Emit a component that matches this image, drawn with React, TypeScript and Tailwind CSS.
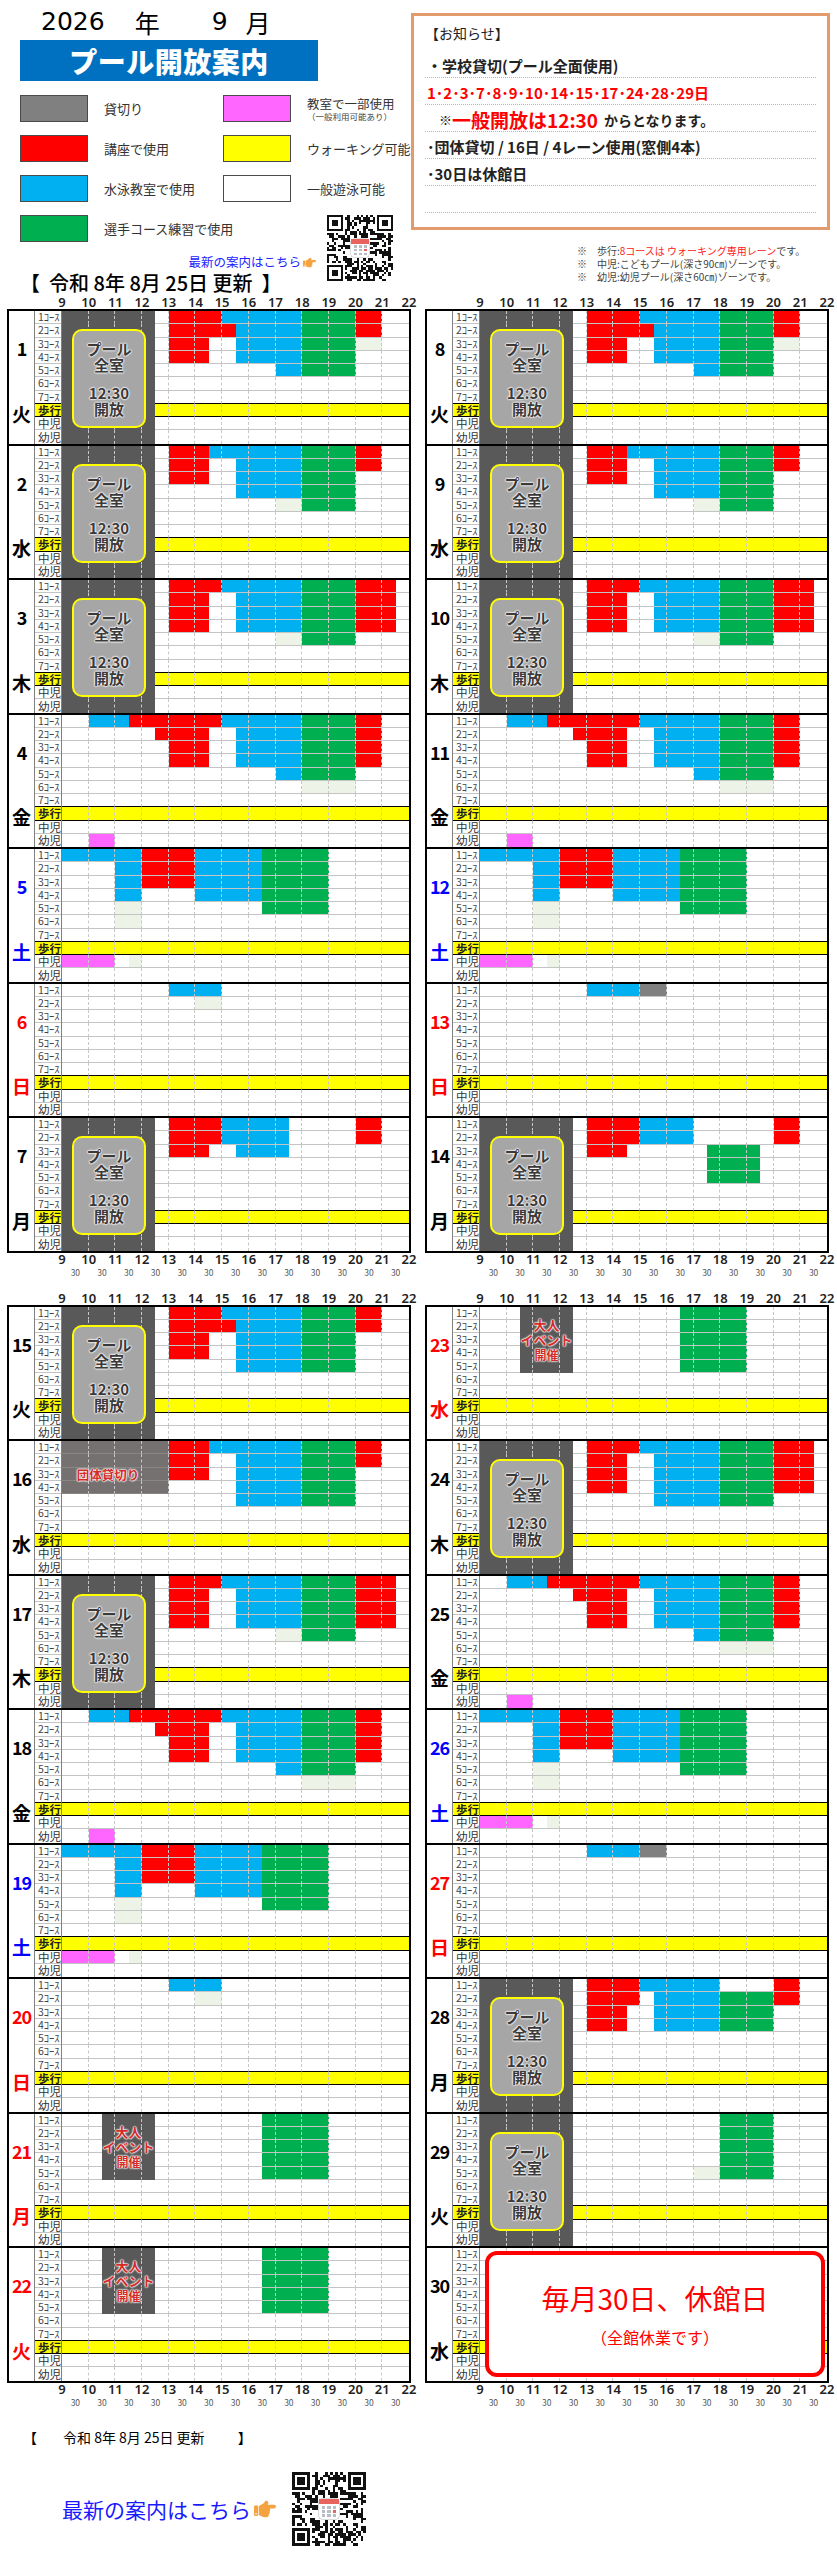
import { FaHandPointRight } from "react-icons/fa"

type Seg = [number, number, number, string]

const WEEK = ["日", "月", "火", "水", "木", "金", "土"]
const HOLIDAYS = [21, 22, 23]
const SCHOOL = [1, 2, 3, 7, 8, 9, 10, 14, 15, 17, 24, 28, 29]
const EVENT = [21, 22, 23]
const LANES = ["1ｺｰｽ", "2ｺｰｽ", "3ｺｰｽ", "4ｺｰｽ", "5ｺｰｽ", "6ｺｰｽ", "7ｺｰｽ", "歩行", "中児", "幼児"]
const HOURS = [9, 10, 11, 12, 13, 14, 15, 16, 17, 18, 19, 20, 21, 22]

const BG: Record<string, string> = {
  ".": "bg-white",
  r: "bg-[#ff0000]",
  b: "bg-[#00b0f0]",
  g: "bg-[#00b050]",
  p: "bg-[#ff66ff]",
  l: "bg-[#eef3e8]",
  d: "bg-[#595959]",
  k: "bg-[#767171]",
  s: "bg-[#808080]",
  y: "bg-[#ffff00]",
}

const TUE: Seg[] = [
  [0, 13, 15, "r"], [0, 15, 18, "b"], [0, 18, 20, "g"], [0, 20, 21, "r"],
  [1, 13, 15.5, "r"], [1, 15.5, 18, "b"], [1, 18, 20, "g"], [1, 20, 21, "r"],
  [2, 13, 14.5, "r"], [2, 15.5, 18, "b"], [2, 18, 20, "g"], [2, 20, 21, "l"],
  [3, 13, 14.5, "r"], [3, 15.5, 18, "b"], [3, 18, 20, "g"],
  [4, 17, 18, "b"], [4, 18, 20, "g"],
]
const TUE15: Seg[] = [
  [0, 13, 15, "r"], [0, 15, 18, "b"], [0, 18, 20, "g"], [0, 20, 21, "r"],
  [1, 13, 15.5, "r"], [1, 15.5, 18, "b"], [1, 18, 20, "g"], [1, 20, 21, "r"],
  [2, 13, 14.5, "r"], [2, 15.5, 18, "b"], [2, 18, 20, "g"],
  [3, 13, 14.5, "r"], [3, 15.5, 18, "b"], [3, 18, 20, "g"],
  [4, 15.5, 18, "b"], [4, 18, 20, "g"],
]
const WED: Seg[] = [
  [0, 13, 14.5, "r"], [0, 14.5, 18, "b"], [0, 18, 20, "g"], [0, 20, 21, "r"],
  [1, 13, 14.5, "r"], [1, 15.5, 18, "b"], [1, 18, 20, "g"], [1, 20, 21, "r"],
  [2, 13, 14.5, "r"], [2, 15.5, 18, "b"], [2, 18, 20, "g"],
  [3, 15.5, 18, "b"], [3, 18, 20, "g"],
  [4, 17, 18, "l"], [4, 18, 20, "g"],
]
const WED16: Seg[] = [
  [0, 13, 14.5, "r"], [0, 14.5, 18, "b"], [0, 18, 20, "g"], [0, 20, 21, "r"],
  [1, 13, 14.5, "r"], [1, 15.5, 18, "b"], [1, 18, 20, "g"], [1, 20, 21, "r"],
  [2, 13, 14.5, "r"], [2, 15.5, 18, "b"], [2, 18, 20, "g"],
  [3, 15.5, 18, "b"], [3, 18, 20, "g"],
  [4, 15.5, 18, "b"], [4, 18, 20, "g"],
]
const THU: Seg[] = [
  [0, 13, 15, "r"], [0, 15, 18, "b"], [0, 18, 20, "g"], [0, 20, 21.5, "r"],
  [1, 13, 14.5, "r"], [1, 15.5, 18, "b"], [1, 18, 20, "g"], [1, 20, 21.5, "r"],
  [2, 13, 14.5, "r"], [2, 15.5, 18, "b"], [2, 18, 20, "g"], [2, 20, 21.5, "r"],
  [3, 13, 14.5, "r"], [3, 15.5, 18, "b"], [3, 18, 20, "g"], [3, 20, 21.5, "r"],
  [4, 17, 18, "l"], [4, 18, 20, "g"],
]
const THU24: Seg[] = [
  [0, 13, 15, "r"], [0, 15, 18, "b"], [0, 18, 20, "g"], [0, 20, 21.5, "r"],
  [1, 13, 14.5, "r"], [1, 15.5, 18, "b"], [1, 18, 20, "g"], [1, 20, 21.5, "r"],
  [2, 13, 14.5, "r"], [2, 15.5, 18, "b"], [2, 18, 20, "g"], [2, 20, 21.5, "r"],
  [3, 13, 14.5, "r"], [3, 15.5, 18, "b"], [3, 18, 20, "g"], [3, 20, 21.5, "r"],
  [4, 15.5, 18, "b"], [4, 18, 20, "g"],
]
const FRI: Seg[] = [
  [0, 10, 11.5, "b"], [0, 11.5, 15, "r"], [0, 15, 18, "b"], [0, 18, 20, "g"], [0, 20, 21, "r"],
  [1, 12.5, 14.5, "r"], [1, 15.5, 18, "b"], [1, 18, 20, "g"], [1, 20, 21, "r"],
  [2, 13, 14.5, "r"], [2, 15.5, 18, "b"], [2, 18, 20, "g"], [2, 20, 21, "r"],
  [3, 13, 14.5, "r"], [3, 15.5, 18, "b"], [3, 18, 20, "g"], [3, 20, 21, "r"],
  [4, 17, 18, "b"], [4, 18, 20, "g"],
  [5, 18, 20, "l"],
  [9, 10, 11, "p"],
]
const SAT: Seg[] = [
  [0, 9, 12, "b"], [0, 12, 14, "r"], [0, 14, 16.5, "b"], [0, 16.5, 19, "g"],
  [1, 11, 12, "b"], [1, 12, 14, "r"], [1, 14, 16.5, "b"], [1, 16.5, 19, "g"],
  [2, 11, 12, "b"], [2, 12, 14, "r"], [2, 14, 16.5, "b"], [2, 16.5, 19, "g"],
  [3, 11, 12, "b"], [3, 14, 16.5, "b"], [3, 16.5, 19, "g"],
  [4, 11, 12, "l"], [4, 16.5, 19, "g"],
  [5, 11, 12, "l"],
  [8, 9, 11, "p"], [8, 11.5, 12, "l"],
]
const SUN_A: Seg[] = [[0, 13, 15, "b"], [1, 14, 15, "l"]]
const SUN_B: Seg[] = [[0, 13, 15, "b"], [0, 15, 16, "s"]]
const MON7: Seg[] = [
  [0, 13, 15, "r"], [0, 15, 17.5, "b"], [0, 20, 21, "r"],
  [1, 13, 15, "r"], [1, 15, 17.5, "b"], [1, 20, 21, "r"],
  [2, 13, 14.5, "r"], [2, 15.5, 17.5, "b"],
]
const MON14: Seg[] = [
  [0, 13, 15, "r"], [0, 15, 17, "b"], [0, 20, 21, "r"],
  [1, 13, 15, "r"], [1, 15, 17, "b"], [1, 20, 21, "r"],
  [2, 13, 14.5, "r"], [2, 17.5, 19.5, "g"],
  [3, 17.5, 19.5, "g"], [4, 17.5, 19.5, "g"],
]
const MON28: Seg[] = [
  [0, 13, 15, "r"], [0, 15, 18, "b"], [0, 20, 21, "r"],
  [1, 13, 15, "r"], [1, 15.5, 18, "b"], [1, 18, 20, "g"], [1, 20, 21, "r"],
  [2, 13, 14.5, "r"], [2, 15.5, 18, "b"], [2, 18, 20, "g"],
  [3, 13, 14.5, "r"], [3, 15.5, 18, "b"], [3, 18, 20, "g"],
]
const TUE29: Seg[] = [
  [0, 18, 20, "g"], [1, 18, 20, "g"], [2, 18, 20, "g"], [3, 18, 20, "g"],
  [4, 17, 18, "l"], [4, 18, 20, "g"],
]

const SEGS: Record<number, Seg[]> = {
  1: TUE, 2: WED, 3: THU, 4: FRI, 5: SAT, 6: SUN_A, 7: MON7,
  8: TUE, 9: WED, 10: THU, 11: FRI, 12: SAT, 13: SUN_B, 14: MON14,
  15: TUE15, 16: WED16, 17: THU, 18: FRI, 19: SAT, 20: SUN_A,
  24: THU24, 25: FRI, 26: SAT, 27: SUN_B, 28: MON28, 29: TUE29,
}

function buildRows(day: number) {
  const rows = Array.from({ length: 10 }, () => Array<string>(26).fill("."))
  const put = (r: number, a: number, b: number, c: string) => {
    for (let i = (a - 9) * 2; i < (b - 9) * 2; i++) rows[r][i] = c
  }
  if (SCHOOL.includes(day)) {
    for (let r = 0; r < 10; r++) put(r, 9, 12.5, "d")
    put(7, 12.5, 22, "y")
  } else {
    put(7, 9, 22, "y")
  }
  if (day === 16) for (let r = 0; r < 4; r++) put(r, 9, 13, "k")
  if (EVENT.includes(day)) {
    for (let r = 0; r < 5; r++) {
      put(r, 10.5, 12.5, "d")
      put(r, 16.5, 19, "g")
    }
  }
  for (const [r, a, b, c] of SEGS[day] ?? []) put(r, a, b, c)
  return rows
}

function bottomLine(r: number, c: string) {
  if (r === 9) return ""
  if (c === "d") return "border-b border-b-[#595959]"
  if (c === "k") return "border-b border-b-[#8a8585]"
  if (r === 6 || r === 7) return "border-b border-b-black"
  return "border-b border-b-[#c4c4c4]"
}

const OUTLINE = "[text-shadow:0_0_2px_#fff,0_0_2px_#fff,0_0_2px_#fff,0_0_1px_#fff]"

function DayBlock({ day, last }: { day: number; last: boolean }) {
  const w = WEEK[(day + 1) % 7]
  const tone =
    w === "土" ? "text-[#0000ff]" : w === "日" || HOLIDAYS.includes(day) ? "text-[#ff0000]" : "text-black"
  const rows = buildRows(day)

  return (
    <div className={`flex ${last ? "" : "border-b-2 border-black"}`}>
      <div className={`flex w-[26px] flex-col items-center border-r border-[#808080] font-bold ${tone}`}>
        <span className="mt-[27px] text-[18px] leading-[20px] tracking-[-1px]">{day}</span>
        <span className="mt-auto mb-[20px] text-[19px] leading-[20px]">{w}</span>
      </div>
      <div className="w-[27px] border-r border-[#808080]">
        {LANES.map((lane, r) => (
          <div
            key={lane}
            className={`flex h-[13.25px] items-center ${r === 7 ? "bg-[#ffff00]" : "bg-white"} ${
              r === 9 ? "" : r === 6 || r === 7 ? "border-b border-black" : "border-b border-[#c4c4c4]"
            }`}
          >
            {r < 7 ? (
              <span className="pl-[3px] text-[10.5px] leading-[12px] whitespace-nowrap text-[#444]">{lane}</span>
            ) : (
              <span className={`pl-[3px] text-[11.5px] leading-[12px] ${r === 7 ? "font-bold text-[#222]" : "text-[#333]"}`}>
                {lane}
              </span>
            )}
          </div>
        ))}
      </div>
      <div className="relative flex-1">
        {rows.map((row, r) => (
          <div key={r} className="grid h-[13.25px] grid-cols-[repeat(26,minmax(0,1fr))]">
            {row.map((c, i) => (
              <div
                key={i}
                className={`${BG[c]} ${bottomLine(r, c)} ${
                  i % 2 === 1 && i < 25 ? "border-r border-r-[#c8c8c8] [border-right-style:dashed]" : ""
                }`}
              />
            ))}
          </div>
        ))}

        {SCHOOL.includes(day) && (
          <div
            className={`absolute top-[18px] left-[10px] flex h-[99px] w-[74px] flex-col items-center rounded-[10px] border-[2.5px] border-[#ffff00] bg-[#a6a6a6] pt-[10px] text-[15px] leading-[16px] font-bold text-[#3a3a3a] ${OUTLINE}`}
          >
            <span>プール</span>
            <span>全室</span>
            <span className="mt-[12px]">12:30</span>
            <span>開放</span>
          </div>
        )}

        {day === 16 && (
          <div className={`absolute top-[26px] left-0 w-[92px] text-center text-[12.5px] leading-[16px] font-bold text-[#d42a2a] ${OUTLINE}`}>
            団体貸切り
          </div>
        )}

        {EVENT.includes(day) && (
          <div
            className={`absolute top-[10px] left-[38px] flex w-[57px] flex-col items-center text-[13px] leading-[15px] font-bold text-[#d42a2a] ${OUTLINE}`}
          >
            <span>大人</span>
            <span className="whitespace-nowrap">イベント</span>
            <span className="text-[12px]">開催</span>
          </div>
        )}

        {day === 30 && (
          <div className="absolute top-[3px] right-[2px] bottom-[4px] left-[5px] flex flex-col items-center rounded-[12px] border-4 border-[#ff0000] bg-white">
            <span className="mt-[26px] text-[28px] leading-[34px] text-[#ff0000]">毎月30日、休館日</span>
            <span className="mt-[12px] text-[16px] leading-[20px] text-[#ff0000]">（全館休業です）</span>
          </div>
        )}
      </div>
    </div>
  )
}

function HourLabels() {
  return (
    <div className="flex h-[13px] pl-[41.65px] font-['Noto_Sans',sans-serif] text-[13px] leading-[13px] font-semibold text-[#222]">
      {HOURS.map((h) => (
        <span key={h} className="w-[26.69px] shrink-0 text-center">
          {h}
        </span>
      ))}
    </div>
  )
}

function HalfLabels() {
  return (
    <div className="flex h-[12px] pl-[55px] text-[8.5px] leading-[12px] text-[#555]">
      {HOURS.slice(0, 13).map((h) => (
        <span key={h} className="w-[26.69px] shrink-0 text-center">
          30
        </span>
      ))}
    </div>
  )
}

function Panel({ days }: { days: number[] }) {
  return (
    <div className="w-[404px]">
      <HourLabels />
      <div className="w-[404px] border-2 border-black bg-white">
        {days.map((d, i) => (
          <DayBlock key={d} day={d} last={i === days.length - 1} />
        ))}
      </div>
      <HourLabels />
      <HalfLabels />
    </div>
  )
}

function QrCode({ size }: { size: number }) {
  const n = 29
  let seed = 4217
  const rnd = () => {
    seed = (seed * 9301 + 49297) % 233280
    return seed / 233280
  }
  const mods: [number, number][] = []
  for (let y = 0; y < n; y++) {
    for (let x = 0; x < n; x++) {
      const finder = (x < 8 && y < 8) || (x >= n - 8 && y < 8) || (x < 8 && y >= n - 8)
      const logo = x >= 10 && x <= 18 && y >= 10 && y <= 18
      if (!finder && !logo && rnd() > 0.5) mods.push([x, y])
    }
  }
  const corners: [number, number][] = [[0, 0], [n - 7, 0], [0, n - 7]]
  return (
    <svg width={size} height={size} viewBox={`0 0 ${n} ${n}`} shapeRendering="crispEdges">
      <rect width={n} height={n} fill="#fff" />
      {mods.map(([x, y]) => (
        <rect key={`${x}-${y}`} x={x} y={y} width={1} height={1} fill="#111" />
      ))}
      {corners.map(([x, y]) => (
        <g key={`${x}-${y}`}>
          <rect x={x} y={y} width={7} height={7} fill="#111" />
          <rect x={x + 1} y={y + 1} width={5} height={5} fill="#fff" />
          <rect x={x + 2} y={y + 2} width={3} height={3} fill="#111" />
        </g>
      ))}
      <rect x={10.5} y={10.5} width={8} height={8} rx={1} fill="#fff" stroke="#d0d0d0" strokeWidth={0.3} />
      <rect x={10.5} y={10.5} width={8} height={2.2} fill="#e8625e" />
      {[0, 1, 2].map((a) =>
        [0, 1, 2].map((b) => (
          <rect key={`${a}${b}`} x={11.7 + a * 2.2} y={13.4 + b * 1.6} width={1.3} height={1} fill={a === 2 && b === 1 ? "#e8625e" : "#b8bcc4"} />
        ))
      )}
    </svg>
  )
}

const LEGEND = [
  { c: "bg-[#808080]", t: "貸切り" },
  { c: "bg-[#ff66ff]", t: "教室で一部使用", s: "（一般利用可能あり）" },
  { c: "bg-[#ff0000]", t: "講座で使用" },
  { c: "bg-[#ffff00]", t: "ウォーキング可能" },
  { c: "bg-[#00b0f0]", t: "水泳教室で使用" },
  { c: "bg-white", t: "一般遊泳可能" },
  { c: "bg-[#00b050]", t: "選手コース練習で使用" },
]

function Header() {
  return (
    <div className="flex h-[296px]">
      <div className="w-[411px] pl-[20px]">
        <div className="flex h-[40px] items-start pt-[7px] pl-[21px] font-['DejaVu_Sans','Noto_Sans_CJK_JP',sans-serif] text-[25px] leading-[30px] text-black">
          <span>2026</span>
          <span className="ml-[30px] font-['Noto_Sans_CJK_JP',sans-serif]">年</span>
          <span className="ml-[52px]">9</span>
          <span className="ml-[18px] font-['Noto_Sans_CJK_JP',sans-serif]">月</span>
        </div>
        <div className="flex h-[41px] w-[298px] items-center justify-center bg-[#0070c0] text-[28px] leading-[32px] font-black tracking-[0.5px] text-white">
          プール開放案内
        </div>
        <div className="mt-[14px] grid w-[380px] grid-cols-[203px_1fr] gap-y-[13px]">
          {LEGEND.map((item) => (
            <div key={item.t} className="flex h-[27px] items-center gap-[16px]">
              <div className={`h-[27px] w-[68px] shrink-0 border border-[#4a4a4a] ${item.c}`} />
              <div className="flex flex-col">
                <span className={`${item.s ? "text-[12.5px] leading-[15px]" : "text-[13px] leading-[16px]"} whitespace-nowrap text-[#333]`}>
                  {item.t}
                </span>
                {item.s && <span className="text-[8.5px] leading-[10px] whitespace-nowrap text-[#444]">{item.s}</span>}
              </div>
            </div>
          ))}
          <div className="h-[27px] pl-[104px]">
            <QrCode size={66} />
          </div>
        </div>
        <div className="mt-[12px] flex h-[16px] w-[296px] items-center justify-end gap-[2px] text-[12.5px] leading-[16px] text-[#2222ff]">
          <span>最新の案内はこちら</span>
          <FaHandPointRight className="h-[13px] w-[13px] text-[#f4a340]" />
        </div>
        <div className="mt-[1px] h-[24px] text-[20px] leading-[24px] font-medium whitespace-pre text-black">
          {"【  令和 8年 8月 25日 更新  】"}
        </div>
      </div>
      <div className="w-[426px]">
        <div className="mt-[13px] h-[217px] w-[419px] border-[3px] border-[#e39b6c] px-[11px] pt-[5px]">
          <div className="text-[14px] leading-[24px] text-[#222]">【お知らせ】</div>
          <div className="mt-[6px]">
            <div className="flex h-[27px] items-center border-b border-dotted border-[#b5b5b5] pt-[4px] pl-[2px] text-[15px] font-bold text-[#222]">
              ・学校貸切(プール全面使用)
            </div>
            <div className="flex h-[27px] items-center border-b border-dotted border-[#b5b5b5] pt-[4px] pl-[2px] text-[15px] font-bold text-[#ff0000]">
              1･2･3･7･8･9･10･14･15･17･24･28･29日
            </div>
            <div className="flex h-[27px] items-center border-b border-dotted border-[#b5b5b5] pt-[4px] pl-[14px] text-[#222]">
              <span className="text-[13px]">※</span>
              <span className="text-[19px] leading-[22px] font-bold text-[#ff0000]">一般開放は12:30</span>
              <span className="ml-[6px] text-[14px] font-bold">からとなります。</span>
            </div>
            <div className="flex h-[27px] items-center border-b border-dotted border-[#b5b5b5] pt-[4px] pl-[2px] text-[15px] font-bold text-[#222]">
              ･団体貸切 / 16日 / 4レーン使用(窓側4本)
            </div>
            <div className="flex h-[27px] items-center border-b border-dotted border-[#b5b5b5] pt-[4px] pl-[2px] text-[15px] font-bold text-[#222]">
              ･30日は休館日
            </div>
            <div className="h-[27px] border-b border-dotted border-[#b5b5b5]" />
          </div>
        </div>
        <div className="mt-[14px] pl-[166px] text-[10px] leading-[13px] whitespace-nowrap text-[#444]">
          <div>
            ※　歩行:<span className="text-[#ff2020]">8コースは ウォーキング専用レーン</span>です。
          </div>
          <div>※　中児:こどもプール(深さ90㎝)ゾーンです。</div>
          <div>※　幼児:幼児プール(深さ60㎝)ゾーンです。</div>
        </div>
      </div>
    </div>
  )
}

export default function App() {
  const range = (a: number, b: number) => Array.from({ length: b - a + 1 }, (_, i) => a + i)

  return (
    <div className="min-h-[2560px] w-[837px] bg-white font-['Noto_Sans_CJK_JP','Noto_Sans',sans-serif] text-[#222]">
      <Header />

      <div className="flex gap-[14px] pl-[7px]">
        <Panel days={range(1, 7)} />
        <Panel days={range(8, 14)} />
      </div>

      <div className="mt-[14px] flex gap-[14px] pl-[7px]">
        <Panel days={range(15, 22)} />
        <Panel days={range(23, 30)} />
      </div>

      <div className="mt-[17px] flex h-[24px] items-center text-[14px] leading-[24px] text-black">
        <span className="ml-[23px]">【</span>
        <span className="ml-[26px]">令和 8年 8月 25日 更新</span>
        <span className="ml-[33px]">】</span>
      </div>

      <div className="mt-[23px] flex items-center">
        <div className="ml-[62px] flex items-center gap-[3px] text-[21px] leading-[28px] text-[#1a1aff]">
          <span>最新の案内はこちら</span>
          <FaHandPointRight className="h-[22px] w-[22px] text-[#f4a340]" />
        </div>
        <div className="ml-[16px]">
          <QrCode size={74} />
        </div>
      </div>
    </div>
  )
}
